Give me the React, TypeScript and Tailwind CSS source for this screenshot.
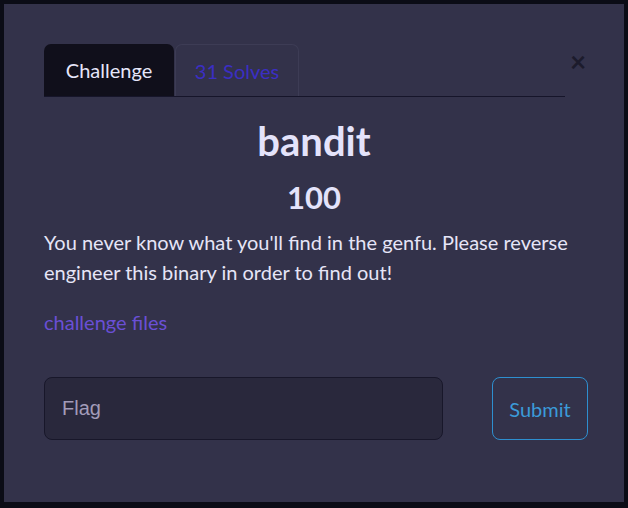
import React from 'react';

const Tabs = () => {
  return (
    <div className="flex items-end border-b border-[#16152a] mr-[19px]">
      <div className="h-[52px] w-[130px] rounded-t-[7px] bg-[#100f1b] text-[#e6e6fa] text-xl flex items-center justify-center">
        Challenge
      </div>
      <div className="ml-[1px] h-[52px] w-[124px] rounded-t-[7px] border border-b-0 border-[#3d3c55] text-[#3b2ec4] text-xl flex items-center justify-center">
        31 Solves
      </div>
    </div>
  );
};

const App = () => {
  return (
    <div className="w-[628px] h-[508px] bg-[#0b0c16] pt-[4px] pl-[4px] font-['Lato',sans-serif]">
      <div className="w-[620px] h-[498px] bg-[#33324a] relative px-[40px] pt-[40px]">
        <button className="absolute left-[566px] top-[43px] text-[#1c1b2c] text-[28px] leading-none font-bold">
          ×
        </button>
        <Tabs />
        <h1 className="mt-[20px] text-center text-[40px] font-bold leading-[48px] text-[#e4e3fb]">bandit</h1>
        <h2 className="mt-[11px] text-center text-[31px] font-bold leading-[42px] text-[#e4e3fb]">100</h2>
        <p className="mt-[9px] text-xl leading-[30px] text-[#e6e5f7]">
          You never know what you'll find in the genfu. Please reverse engineer this binary in order to find out!
        </p>
        <a className="block mt-[20px] text-xl leading-[30px] text-[#6a4fd6]">challenge files</a>
        <div className="mt-[40px] flex items-center">
          <input
            placeholder="Flag"
            className="shrink-0 w-[399px] h-[63px] rounded-[8px] bg-[#29283c] border border-[#18172a] px-[17px] text-xl text-[#a29cb9] placeholder:text-[#a29cb9] font-['Liberation_Sans',sans-serif] outline-none"
          />
          <button className="shrink-0 ml-[49px] w-[96px] h-[63px] rounded-[8px] border border-[#2e8fcf] text-[#3b9bd9] text-xl">
            Submit
          </button>
        </div>
      </div>
    </div>
  );
};

export default App;
